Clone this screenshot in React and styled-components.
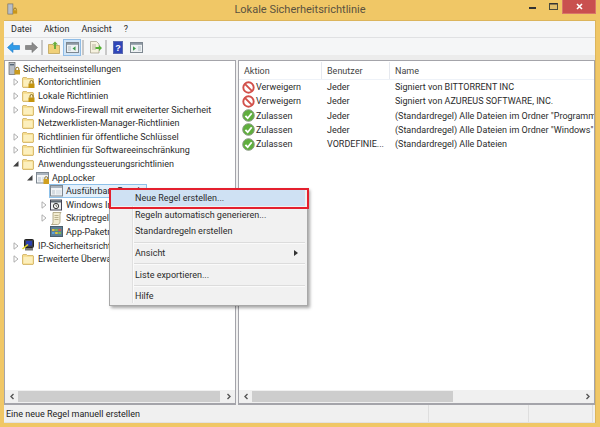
import React from "react";
import styled, { createGlobalStyle } from "styled-components";

const Global = createGlobalStyle`
  html, body { margin: 0; padding: 0; width: 600px; height: 427px; overflow: hidden; }
  * { box-sizing: border-box; }
`;

const Frame = styled.div`
  position: relative; width: 600px; height: 427px; background: #f0c766;
  display: flex; flex-direction: column; padding: 0 4px 4px 4px;
  font-family: Roboto, "Open Sans", sans-serif; font-size: 9px; color: #2b2b2b;
`;
const TitleBar = styled.div`height: 20px; position: relative; display: flex; align-items: center; justify-content: center; color: #5a5240; font-size: 11px; flex: none; padding-bottom: 1px;`;
const AppIcon = styled.svg`position: absolute; left: 3px; top: 3px;`;
const Controls = styled.div`position: absolute; right: 0; top: 0; display: flex; align-items: flex-start;`;
const Ctl = styled.div`width: ${p => p.$w}px; height: 14px; display: flex; justify-content: center; padding-top: ${p => p.$t}px;`;
const CloseBtn = styled.div`width: 34px; height: 14px; background: #c9504f; border: 1px solid #d9756a; border-top: 0; display: flex; align-items: center; justify-content: center;`;
const Inner = styled.div`flex: 1; display: flex; flex-direction: column; background: #f0f0f0; min-height: 0; border-top: 1px solid #dcb55c; border-right: 1px solid #dcb55c;`;
const MenuBar = styled.div`height: 17px; display: flex; align-items: center; background: #f5f6f7; border-bottom: 1px solid #e0e1e3; padding-left: 7px; gap: 12px; flex: none;`;
const ToolBar = styled.div`
  height: 22px; display: flex; align-items: center; flex: none; padding-bottom: 3px;
  background: linear-gradient(#f5f6f7 0, #f5f6f7 17px, #ececec 17px, #ececec 100%);
`;
const ToolBtn = styled.div`
  width: 18px; height: 17px; display: flex; align-items: center; justify-content: center;
  ${p => p.$on && "background:#cfe4f7;border:1px solid #8fbce6;"}
`;
const Sep = styled.div`width: 2px; height: 15px; background: #c8c8c8; margin: 0 2px 0 ${p => p.$ml ?? 1}px;`;
const Panes = styled.div`flex: 1; display: flex; min-height: 0; gap: 2px; background: #f0f0f0;`;
const Pane = styled.div`
  width: ${p => p.$w}; flex: ${p => p.$grow ? 1 : "none"}; background: #fff; display: flex; flex-direction: column;
  border: 1px solid #a4a4aa; border-width: 1px 1px 2px 1px; min-width: 0;
`;
const PaneBody = styled.div`flex: 1; min-height: 0; overflow: hidden;`;
const Tree = styled.div`padding-top: 1px; display: flex; flex-direction: column;`;
const Row = styled.div`height: 13.6px; display: flex; align-items: center; padding-left: ${p => p.$d}px; white-space: nowrap;`;
const Twist = styled.div`width: 13px; height: 12px; flex: none; display: flex; align-items: center; justify-content: center;`;
const IconSlot = styled.div`width: 13px; height: 13px; flex: none; display: flex; align-items: center; justify-content: flex-start;`;
const Label = styled.span`margin-left: 3px;`;
const SelBox = styled.div`
  display: flex; align-items: center; height: 14px; width: 98px; overflow: hidden; margin-left: -1px;
  background: #e4f0fb; border: 1px solid #8ec1ea;
`;
const Scroll = styled.div`height: 13px; background: #f0f0f0; flex: none; display: flex; align-items: center;`;
const ScrollBtn = styled.div`width: 13px; height: 13px; flex: none; display: flex; align-items: center; justify-content: center;`;
const Thumb = styled.div`width: ${p => p.$w}px; flex: none; height: 11px; background: #cdcdcd;`;
const Spacer = styled.div`flex: 1;`;
const Status = styled.div`height: 18px; flex: none; background: #f0f0f0; display: flex; align-items: center; color: #222; border-bottom: 1px solid #e2e2e2;`;
const StatusCell = styled.div`
  width: ${p => p.$w}px; height: 100%; flex: none; display: flex; align-items: center; padding: 1px 0 0 2px;
  ${p => p.$line && "border-right: 1px solid #dedede;"}
`;
const Header = styled.div`height: 18px; display: flex; align-items: center; border-bottom: 1px solid #eef2f8; margin-top: 1px;`;
const HCell = styled.div`width: ${p => p.$w}px; height: 100%; flex: none; display: flex; align-items: center; padding-left: 5px; color: #444; ${p => p.$line && "border-right: 1px solid #e6e9ef;"}`;
const TRow = styled.div`height: 14.25px; display: flex; align-items: center; white-space: nowrap;`;
const TCell = styled.div`width: ${p => p.$w}px; flex: none; padding-left: ${p => p.$pl ?? 5}px; display: flex; align-items: center; overflow: hidden;`;
const ActionText = styled.span`margin-left: 1px;`;
const Menu = styled.div`
  position: absolute; left: 109px; top: 188px; width: 199px; height: 118px; background: #f1f1f1;
  border: 1px solid #a8a8a8; box-shadow: 2px 2px 3px rgba(0,0,0,.35); padding: 1px 2px 0 0;
  display: flex; flex-direction: column;
`;
const MenuGutter = styled.div`position: absolute; left: 22px; top: 1px; bottom: 2px; width: 1px; background: #e0e0e0; box-shadow: 1px 0 0 #fafafa;`;
const Item = styled.div`
  height: ${p => p.$h || 16}px; display: flex; align-items: center; padding-left: 25px; position: relative; flex: none;
  justify-content: space-between; padding-right: 7px;
  ${p => p.$hi && "background:#cfe1f3;"}
`;
const MSep = styled.div`height: 1px; background: #dcdcdc; box-shadow: 0 1px 0 #fafafa; margin: ${p => p.$m}; flex: none;`;
const RedBox = styled.div`position: absolute; left: 109px; top: 188px; width: 200px; height: 21px; border: 2px solid #e4202e; pointer-events: none;`;

const Folder = () => (
  <svg width="12" height="12" viewBox="0 0 12 12"><path d="M.5 2l.5-.5h3.500l1 1h5.500l.5.500v8l-.5.500H1l-.5-.5z" fill="#f6dc8c" stroke="#cfae5e" strokeWidth=".8"/><rect x="1.500" y="3.800" width="9" height="6.500" fill="#fcefbd"/></svg>
);
const LockFolder = () => (
  <svg width="13" height="12" viewBox="0 0 13 12"><path d="M.5 2l.5-.5h3.500l1 1h5.500l.5.500v8l-.5.500H1l-.5-.5z" fill="#f6dc8c" stroke="#cfae5e" strokeWidth=".8"/><rect x="1.500" y="3.800" width="9" height="6.500" fill="#fcefbd"/><rect x="6.500" y="7.500" width="6" height="4.500" fill="#c4940f"/><path d="M8 7.500V6a1.500 1.500 0 013 0v1.500" fill="none" stroke="#7c6010" strokeWidth=".9"/></svg>
);
const Srv = () => (
  <svg width="12" height="13" viewBox="0 0 12 13"><rect x="1" y="0.500" width="6" height="12" fill="#b8bec6" stroke="#666" strokeWidth=".7"/><rect x="2" y="2" width="4" height="1.400" fill="#567"/><rect x="6.500" y="8" width="5.500" height="4.500" fill="#c99a1e"/><path d="M7.800 8V6.800a1.500 1.500 0 013 0V8" fill="none" stroke="#8a6a14"/></svg>
);
const WinIcon = ({ lock }) => (
  <svg width="13" height="12" viewBox="0 0 13 12"><rect x=".5" y=".5" width="12" height="10.500" fill="#f2f4f6" stroke="#7d8790"/><rect x="1" y="1" width="11" height="2" fill="#a9b3bd"/><rect x="2" y="5" width="3" height="4.500" fill="#d3dae0"/><rect x="6" y="5" width="5.500" height="4.500" fill="#dfe5ea"/>{lock && <><rect x="7.500" y="7" width="5.500" height="5" fill="#d0a020"/><path d="M8.800 7V6a1.400 1.400 0 012.800 0v1" fill="none" stroke="#8a6a14" strokeWidth=".8"/></>}</svg>
);
const Exe = () => (
  <svg width="12" height="12" viewBox="0 0 12 12"><rect x=".5" y="1" width="11" height="10" fill="#eef0f2" stroke="#445"/><rect x="1" y="1.500" width="10" height="2" fill="#5d6770"/><circle cx="6" cy="7" r="2.600" fill="#f8f8f8" stroke="#333"/><path d="M6 5.500V7l1 .6" stroke="#333" strokeWidth=".7" fill="none"/></svg>
);
const Script = () => (
  <svg width="12" height="13" viewBox="0 0 12 13"><path d="M3 .5h8c-1 1-1 2-1 3v6c0 1.500-1 3-2.500 3H1.500c1-.5 1.500-1.500 1.500-3z" fill="#f2ecd0" stroke="#a49a74" strokeWidth=".8"/><path d="M4.500 3.500h4M4.500 5.500h4M4.500 7.500h4" stroke="#a49a74" strokeWidth=".7"/></svg>
);
const Pack = () => (
  <svg width="13" height="11" viewBox="0 0 13 11"><rect x=".5" y=".5" width="12" height="10" fill="#5d7f94" stroke="#4a5f6c"/><rect x="2" y="3" width="2.500" height="2" fill="#e6c13c"/><rect x="5.200" y="3" width="2.500" height="2" fill="#7cc04b"/><rect x="8.400" y="3" width="2.500" height="2" fill="#d95a4a"/><rect x="2" y="6" width="2.500" height="2" fill="#5ca4dc"/><rect x="5.200" y="6" width="2.500" height="2" fill="#e6c13c"/><rect x="8.400" y="6" width="2.500" height="2" fill="#7cc04b"/></svg>
);
const IpSec = () => (
  <svg width="13" height="13" viewBox="0 0 13 13"><rect x="2.500" y=".5" width="9" height="8" rx="1" fill="#3a3f4a" stroke="#222"/><rect x="4" y="2" width="6" height="4.500" fill="#2a3fb0"/><rect x="3" y="9" width="8" height="2.500" fill="#777"/><path d="M.5 10L6 5.500" stroke="#e6d820" strokeWidth="1.600"/></svg>
);
const Closed = () => <svg width="6" height="8" viewBox="0 0 6 8"><path d="M1 .8L5 4 1 7.200z" fill="#fff" stroke="#a6a6a6" strokeWidth=".9"/></svg>;
const Open = () => <svg width="7" height="7" viewBox="0 0 7 7"><path d="M6.500 1v5.500H1z" fill="#404040"/></svg>;
const ArrowL = () => <svg width="6" height="7" viewBox="0 0 6 7"><path d="M4.500 1L2 3.500 4.500 6" fill="none" stroke="#555" strokeWidth="1.400"/></svg>;
const ArrowR = () => <svg width="6" height="7" viewBox="0 0 6 7"><path d="M1.500 1L4 3.500 1.500 6" fill="none" stroke="#555" strokeWidth="1.400"/></svg>;

const Deny = () => (
  <svg width="13" height="13" viewBox="0 0 13 13"><circle cx="6.500" cy="6.500" r="5.200" fill="#fff" stroke="#d2504a" strokeWidth="1.900"/><path d="M2.900 2.900l7.200 7.200" stroke="#d2504a" strokeWidth="1.900"/></svg>
);
const Allow = () => (
  <svg width="13" height="13" viewBox="0 0 13 13"><circle cx="6.500" cy="6.500" r="5.800" fill="#5fae3d" stroke="#8a9a84" strokeWidth="1"/><path d="M3.400 6.800l2.300 2.400 4-5" fill="none" stroke="#fff" strokeWidth="1.800"/></svg>
);

const tree = [
  { d: 4, t: "c", i: <LockFolder />, l: "Kontorichtlinien" },
  { d: 4, t: "c", i: <LockFolder />, l: "Lokale Richtlinien" },
  { d: 4, t: "c", i: <Folder />, l: "Windows-Firewall mit erweiterter Sicherheit" },
  { d: 4, t: "", i: <Folder />, l: "Netzwerklisten-Manager-Richtlinien" },
  { d: 4, t: "c", i: <Folder />, l: "Richtlinien für öffentliche Schlüssel" },
  { d: 4, t: "c", i: <Folder />, l: "Richtlinien für Softwareeinschränkung" },
  { d: 4, t: "o", i: <Folder />, l: "Anwendungssteuerungsrichtlinien" },
  { d: 18, t: "o", i: <WinIcon lock />, l: "AppLocker" },
  { d: 32, t: "", i: <WinIcon />, l: "Ausführbare Regeln", sel: true },
  { d: 32, t: "c", i: <Exe />, l: "Windows Installer-Regeln" },
  { d: 32, t: "c", i: <Script />, l: "Skriptregeln" },
  { d: 32, t: "", i: <Pack />, l: "App-Paketregeln" },
  { d: 4, t: "c", i: <IpSec />, l: "IP-Sicherheitsrichtlinien" },
  { d: 4, t: "c", i: <Folder />, l: "Erweiterte Überwachungsrichtlinien" },
];
const rows = [
  [<Deny />, "Verweigern", "Jeder", "Signiert von BITTORRENT INC"],
  [<Deny />, "Verweigern", "Jeder", "Signiert von AZUREUS SOFTWARE, INC."],
  [<Allow />, "Zulassen", "Jeder", "(Standardregel) Alle Dateien im Ordner \"Programme\""],
  [<Allow />, "Zulassen", "Jeder", "(Standardregel) Alle Dateien im Ordner \"Windows\""],
  [<Allow />, "Zulassen", "VORDEFINIE...", "(Standardregel) Alle Dateien"],
];

export default function App() {
  return (
    <Frame>
      <Global />
      <TitleBar>
        <AppIcon width="11" height="12" viewBox="0 0 13 13"><rect x="1" y="0.500" width="6" height="12" fill="#b8bec6" stroke="#666" strokeWidth=".7"/><rect x="7" y="8" width="5" height="4" fill="#c9961a"/><path d="M8 8V6.800a1.500 1.500 0 013 0V8" fill="none" stroke="#8a6a14"/></AppIcon>
        Lokale Sicherheitsrichtlinie
        <Controls>
          <Ctl $w={24} $t={7}><svg width="7" height="2"><rect width="7" height="2" fill="#333"/></svg></Ctl>
          <Ctl $w={18} $t={3}><svg width="9" height="7"><rect x=".5" y=".5" width="8" height="6" fill="#e0bd68" stroke="#4a4a3a"/><rect x="1" y="0" width="7" height="1.500" fill="#333"/></svg></Ctl>
          <CloseBtn><svg width="7" height="7" viewBox="0 0 7 7"><path d="M1 1l5 5M6 1L1 6" stroke="#fff" strokeWidth="1.600"/></svg></CloseBtn>
        </Controls>
      </TitleBar>
      <Inner>
        <MenuBar><span>Datei</span><span>Aktion</span><span>Ansicht</span><span>?</span></MenuBar>
        <ToolBar>
          <ToolBtn><svg width="13" height="11" viewBox="0 0 13 11"><path d="M6 .5L.5 5.500 6 10.500V7.500h6.500v-4H6z" fill="#2f9be8" stroke="#1c78c8" strokeWidth=".6"/></svg></ToolBtn>
          <ToolBtn><svg width="13" height="11" viewBox="0 0 13 11"><path d="M7 .5l5.500 5L7 10.500V7.500H.5v-4H7z" fill="#8a8a8a" stroke="#6e6e6e" strokeWidth=".6"/></svg></ToolBtn>
          <Sep />
          <ToolBtn><svg width="12" height="13" viewBox="0 0 12 13"><path d="M.5 3.500h4l1 1h6v8H.5z" fill="#f0d078" stroke="#b79a4a" strokeWidth=".7"/><path d="M7 .5L4 3.500h2V8h2V3.500h2z" fill="#6cae3c"/></svg></ToolBtn>
          <ToolBtn $on><svg width="13" height="11" viewBox="0 0 13 11"><rect x=".5" y=".5" width="12" height="10" fill="#eef1f3" stroke="#7d8790"/><rect x="1" y="1" width="11" height="1.800" fill="#8d98a3"/><rect x="2" y="4" width="3" height="5" fill="#cfd7dc"/><path d="M9.500 4.200v4.600L6.500 6.500z" fill="#3f9c4d"/></svg></ToolBtn>
          <Sep />
          <ToolBtn><svg width="13" height="13" viewBox="0 0 13 13"><path d="M1.500.5h6l2.500 2.500v9H1.500z" fill="#f6f2df" stroke="#9f9a82" strokeWidth=".7"/><path d="M3 4h4M3 6h4M3 8h4" stroke="#9f9a82" strokeWidth=".7"/><path d="M6.500 6h3.500V4l3 3-3 3V8H6.500z" fill="#55b033"/></svg></ToolBtn>
          <Sep />
          <ToolBtn><svg width="10" height="13" viewBox="0 0 10 13"><rect x=".5" y=".5" width="9" height="12" fill="#2f46b8" stroke="#5a68b0"/><text x="5" y="10" textAnchor="middle" fontSize="9" fontWeight="700" fill="#fff" fontFamily="Liberation Sans">?</text></svg></ToolBtn>
          <ToolBtn><svg width="13" height="11" viewBox="0 0 13 11"><rect x=".5" y=".5" width="12" height="10" fill="#eef1f3" stroke="#7d8790"/><rect x="1" y="1" width="11" height="1.800" fill="#8d98a3"/><path d="M3 4.200v4.600l3-2.300z" fill="#3f9c4d"/><rect x="8" y="4" width="3" height="5" fill="#cfd7dc"/></svg></ToolBtn>
        </ToolBar>
        <Panes>
          <Pane $w="232px">
            <PaneBody>
              <Tree>
                <Row $d={3}><Srv /><Label>Sicherheitseinstellungen</Label></Row>
                {tree.map(r => (
                  <Row key={r.l} $d={r.d}>
                    <Twist>{r.t === "c" ? <Closed /> : r.t === "o" ? <Open /> : null}</Twist>
                    {r.sel ? (
                      <SelBox><IconSlot>{r.i}</IconSlot><Label>{r.l}</Label></SelBox>
                    ) : (
                      <><IconSlot>{r.i}</IconSlot><Label>{r.l}</Label></>
                    )}
                  </Row>
                ))}
              </Tree>
            </PaneBody>
            <Scroll>
              <ScrollBtn><ArrowL /></ScrollBtn>
              <Thumb $w={202} />
              <Spacer />
              <ScrollBtn><ArrowR /></ScrollBtn>
            </Scroll>
          </Pane>
          <Pane $grow>
            <PaneBody>
              <Header>
                <HCell $w={83} $line>Aktion</HCell>
                <HCell $w={68} $line>Benutzer</HCell>
                <HCell $w={205}>Name</HCell>
              </Header>
              {rows.map((r, i) => (
                <TRow key={i}>
                  <TCell $w={83} $pl={3}>{r[0]}<ActionText>{r[1]}</ActionText></TCell>
                  <TCell $w={68}>{r[2]}</TCell>
                  <TCell $w={205}>{r[3]}</TCell>
                </TRow>
              ))}
            </PaneBody>
            <Scroll>
              <ScrollBtn><ArrowL /></ScrollBtn>
              <Thumb $w={201} />
              <Spacer />
              <ScrollBtn><ArrowR /></ScrollBtn>
            </Scroll>
          </Pane>
        </Panes>
        <Status>
          <StatusCell $w={425} $line>Eine neue Regel manuell erstellen</StatusCell>
          <StatusCell $w={100} $line />
          <StatusCell $w={64} $line />
        </Status>
      </Inner>
      <Menu>
        <MenuGutter />
        <Item $hi>Neue Regel erstellen...</Item>
        <Item $h={17}>Regeln automatisch generieren...</Item>
        <Item>Standardregeln erstellen</Item>
        <MSep $m="3px 0 2px 24px" />
        <Item>Ansicht<svg width="4" height="6" viewBox="0 0 4 6"><path d="M0 0l4 3-4 3z" fill="#333"/></svg></Item>
        <MSep $m="2px 0 3px 24px" />
        <Item>Liste exportieren...</Item>
        <MSep $m="2px 0 2px 24px" />
        <Item>Hilfe</Item>
      </Menu>
      <RedBox />
    </Frame>
  );
}
